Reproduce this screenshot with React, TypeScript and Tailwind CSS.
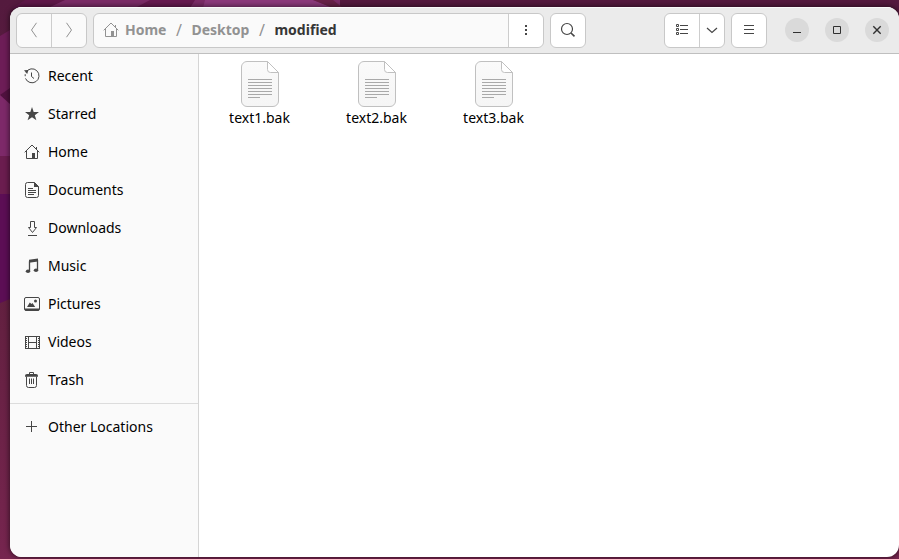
import type { ReactNode } from "react";

type IconProps = { children: ReactNode; className?: string };

function Icon({ children, className = "text-[#464646]" }: IconProps) {
  return (
    <svg
      width="16"
      height="16"
      viewBox="0 0 16 16"
      fill="none"
      stroke="currentColor"
      aria-hidden="true"
      className={`shrink-0 ${className}`}
    >
      {children}
    </svg>
  );
}

const homeShape = (
  <>
    <path d="M.7 8.3 8 1l7.3 7.3M2.5 7v7.5h11V7M12.5 3v2.5" />
    <path d="M8 9h3v5.5H8z" fill="currentColor" stroke="none" />
  </>
);

const places: { name: string; icon: ReactNode }[] = [
  {
    name: "Recent",
    icon: (
      <>
        <path d="M2 4.2a7 7 0 1 1-.5 6.2" />
        <path d="M1.2 6.2v2M7.5 4.5v4l2.5 2" />
        <path d="M0 2.2 4.4 2 3.2 6z" fill="currentColor" stroke="none" />
      </>
    ),
  },
  {
    name: "Starred",
    icon: (
      <path
        d="m8 1 1.7 5H15l-4.2 3.2 1.6 5.1L8 11.2l-4.4 3.1 1.6-5.1L1 6h5.3z"
        fill="currentColor"
        stroke="none"
      />
    ),
  },
  { name: "Home", icon: homeShape },
  {
    name: "Documents",
    icon: (
      <>
        <path d="M10.5.5h-7a2 2 0 0 0-2 2v11a2 2 0 0 0 2 2h9a2 2 0 0 0 2-2v-9z" />
        <path d="M10 0v5h5z" fill="currentColor" stroke="none" />
        <path d="M4 6.5h5M4 8.5h8M4 10.5h8M4 12.5h6" />
      </>
    ),
  },
  {
    name: "Downloads",
    icon: <path d="M6.5 1.5h4v6h2l-4 5-4-5h2zM4 15.5h9" />,
  },
  {
    name: "Music",
    icon: (
      <>
        <path d="M5.5 13V3.2M13.5 12V2" strokeWidth="1.3" />
        <path d="M5 1.8 14 .5v3L5 4.8z" fill="currentColor" stroke="none" />
        <ellipse cx="4" cy="13.2" rx="2.2" ry="1.8" fill="currentColor" stroke="none" />
        <ellipse cx="12" cy="12.2" rx="2.2" ry="1.8" fill="currentColor" stroke="none" />
      </>
    ),
  },
  {
    name: "Pictures",
    icon: (
      <>
        <rect x=".5" y="1.5" width="15" height="13" rx="1.5" />
        <path d="M1 12.5h14v2H1zM3 11l2.8-4.5L7.5 8l1-1 2.7 4z" fill="currentColor" stroke="none" />
        <circle cx="11.5" cy="5" r="1.5" fill="currentColor" stroke="none" />
      </>
    ),
  },
  {
    name: "Videos",
    icon: (
      <>
        <path d="M1 2.5h15M1 14.5h15M4.5 2v13M12.5 2v13M4 8.5h9" />
        <path d="M2 2v13M15 2v13" strokeWidth="2" strokeDasharray="1 1" />
        <path d="M1.5 2v13M15.5 2v13" />
      </>
    ),
  },
  {
    name: "Trash",
    icon: (
      <>
        <path d="M2.5 4.5v9a2 2 0 0 0 2 2h6a2 2 0 0 0 2-2v-9M5.5 6.5V12M7.5 6.5V12M9.5 6.5V12" />
        <path d="M5.5 2V.5h4V2" />
        <path d="M1 4.8V3.5Q1 2 3 2h9q2 0 2 1.5v1.3z" fill="currentColor" stroke="none" />
      </>
    ),
  },
];

const files = ["text1.bak", "text2.bak", "text3.bak"];

function Wallpaper() {
  return (
    <svg
      className="absolute inset-0 h-full w-full"
      viewBox="0 0 899 559"
      preserveAspectRatio="none"
      aria-hidden="true"
    >
      <defs>
        <linearGradient id="base" x1="0" y1="0" x2="0" y2="1">
          <stop offset="0" stopColor="#541a3e" />
          <stop offset=".5" stopColor="#61203f" />
          <stop offset="1" stopColor="#76254f" />
        </linearGradient>
      </defs>
      <path d="M0 0h899v559H0z" fill="url(#base)" />
      <path d="M60 0h280v8H48z" fill="#7a2b66" />
      <path d="M25 0h40L48 8H12z" fill="#5f1849" />
      <path d="M150 0h45l-5 8h-55z" fill="#65194f" />
      <path d="M205 0h108l20 8H203z" fill="#8b397b" />
      <path d="M313 0h20l10 8h-10z" fill="#672047" />
      <path d="M0 36 10 30v65H0z" fill="#6d1d57" />
      <path d="M0 95 10 88v20z" fill="#51113f" />
      <path d="M0 95 10 104v52H0z" fill="#7d2969" />
      <path d="M0 156h10v38H0z" fill="#6b1d4f" />
      <path d="M0 194h10v105l-10 4z" fill="#5c0e55" />
    </svg>
  );
}

function FileIcon() {
  return (
    <svg width="38" height="46" viewBox="0 0 38 46" fill="none" aria-hidden="true">
      <defs>
        <linearGradient id="paper" x1="0" y1="0" x2="0" y2="1">
          <stop stopColor="#fafafa" />
          <stop offset="1" stopColor="#f5f5f5" />
        </linearGradient>
      </defs>
      <path
        d="M26.5.5H6A5.5 5.5 0 0 0 .5 6v34A5.5 5.5 0 0 0 6 45.5h26a5.5 5.5 0 0 0 5.5-5.5V11.5z"
        fill="url(#paper)"
        stroke="#c0c0c0"
      />
      <path d="M26.5.5v8a3 3 0 0 0 3 3h8z" fill="#fff" stroke="#c0c0c0" />
      <path
        d="M7 18.5h24M7 21.5h24M7 24.5h24M7 27.5h24M7 30.5h24M7 33.5h24M7 36.5h12"
        stroke="#a9a9a9"
      />
    </svg>
  );
}

function WindowButton({ label, children }: { label: string; children: ReactNode }) {
  return (
    <button
      type="button"
      aria-label={label}
      className="flex size-6 items-center justify-center rounded-full bg-[#dadada]"
    >
      <Icon className="text-[#303030]">{children}</Icon>
    </button>
  );
}

function Separator() {
  return <span className="w-[25px] text-center text-base font-normal">/</span>;
}

function Header() {
  return (
    <header className="flex h-[47px] shrink-0 items-center border-b border-[#bfbfbf] bg-[#ebebeb] pr-2.5 pl-1.5 shadow-[inset_0_1px_0_#fafafa]">
      <div className="flex h-[35px] w-[71px] shrink-0 divide-x divide-[#cdcdcd] rounded-md border border-[#c8c8c8] bg-[#fafafa]">
        <button type="button" aria-label="Back" className="flex flex-1 items-center justify-center">
          <Icon className="text-[#929292]">
            <path d="m10.5.8-5 7.2 5 7.2" />
          </Icon>
        </button>
        <button type="button" aria-label="Forward" className="flex flex-1 items-center justify-center">
          <Icon className="text-[#929292]">
            <path d="m5.5.8 5 7.2-5 7.2" />
          </Icon>
        </button>
      </div>

      <div className="ml-1.5 flex h-[35px] max-w-[451px] flex-1 rounded-md border border-[#c8c8c8] bg-[#fafafa]">
        <nav aria-label="Path" className="flex flex-1 items-center pl-[9px] text-sm font-bold text-[#929292]">
          <button type="button" className="flex items-center gap-1.5">
            <Icon className="text-[#929292]">{homeShape}</Icon>
            Home
          </button>
          <Separator />
          <button type="button">Desktop</button>
          <Separator />
          <button type="button" className="text-[#363636]">
            modified
          </button>
        </nav>
        <button
          type="button"
          aria-label="Folder menu"
          className="flex w-[35px] items-center justify-center rounded-r-md border-l border-[#cdcdcd] bg-white"
        >
          <Icon>
            <path d="M7 3h2v2H7zM7 7h2v2H7zM7 11h2v2H7z" fill="currentColor" stroke="none" />
          </Icon>
        </button>
      </div>

      <button
        type="button"
        aria-label="Search"
        className="ml-1.5 flex h-[35px] w-9 shrink-0 items-center justify-center rounded-md border border-[#c8c8c8] bg-white"
      >
        <Icon>
          <circle cx="7" cy="7" r="5.5" strokeWidth="1.2" />
          <path d="m11 11 3.5 3.3" strokeWidth="1.6" />
        </Icon>
      </button>

      <div className="ml-auto flex h-[35px] w-[61px] shrink-0 divide-x divide-[#cdcdcd] rounded-md border border-[#c8c8c8] bg-white">
        <button type="button" aria-label="List view" className="flex w-[35px] items-center justify-center">
          <Icon>
            <path d="M2.5 2.5h2v2h-2zM2.5 6.5h2v2h-2zM2.5 10.5h2v2h-2zM6 3.5h8M6 7.5h8M6 11.5h8" />
          </Icon>
        </button>
        <button type="button" aria-label="View options" className="flex flex-1 items-center justify-center">
          <Icon>
            <path d="m3 6 5 4.5L13 6" strokeWidth="1.2" />
          </Icon>
        </button>
      </div>
      <button
        type="button"
        aria-label="Main menu"
        className="ml-1.5 flex h-[35px] w-9 shrink-0 items-center justify-center rounded-md border border-[#c8c8c8] bg-white"
      >
        <Icon>
          <path d="M3 3.5h10M3 7.5h10M3 11.5h10" />
        </Icon>
      </button>

      <div className="ml-[18px] flex shrink-0 gap-4">
        <WindowButton label="Minimize">
          <path d="M4 10.5h8" />
        </WindowButton>
        <WindowButton label="Maximize">
          <path d="M4.5 4.5h7v7h-7z" />
        </WindowButton>
        <WindowButton label="Close">
          <path d="m4.3 4.3 7.4 7.4M11.7 4.3l-7.4 7.4" strokeWidth="1.4" />
        </WindowButton>
      </div>
    </header>
  );
}

function Place({ name, icon }: { name: string; icon: ReactNode }) {
  return (
    <button type="button" className="flex h-[38px] w-full items-center gap-2 pl-3.5 text-left text-sm">
      <Icon>{icon}</Icon>
      {name}
    </button>
  );
}

export default function App() {
  return (
    <div className="relative flex h-screen overflow-hidden bg-[#541a3e] pt-[7px] pb-0.5 pl-2.5 font-['Noto_Sans',sans-serif] text-black">
      <Wallpaper />
      <div className="relative flex min-w-0 flex-1 flex-col overflow-hidden rounded-xl bg-white shadow-[0_0_5px_1px_rgba(0,0,0,0.5)]">
        <Header />
        <div className="flex min-h-0 flex-1">
          <aside className="w-[189px] shrink-0 border-r border-[#d5d5d5] bg-[#fafafa] pt-[3px]">
            {places.map((place) => (
              <Place key={place.name} name={place.name} icon={place.icon} />
            ))}
            <hr className="my-1 border-[#dcdcdc]" />
            <Place name="Other Locations" icon={<path d="M7.5 2v11M2 7.5h11" />} />
          </aside>
          <main className="flex flex-1 flex-wrap content-start pt-[7px] pl-0.5">
            {files.map((file) => (
              <button key={file} type="button" className="flex w-[117px] flex-col items-center gap-px text-sm">
                <FileIcon />
                {file}
              </button>
            ))}
          </main>
        </div>
      </div>
    </div>
  );
}
